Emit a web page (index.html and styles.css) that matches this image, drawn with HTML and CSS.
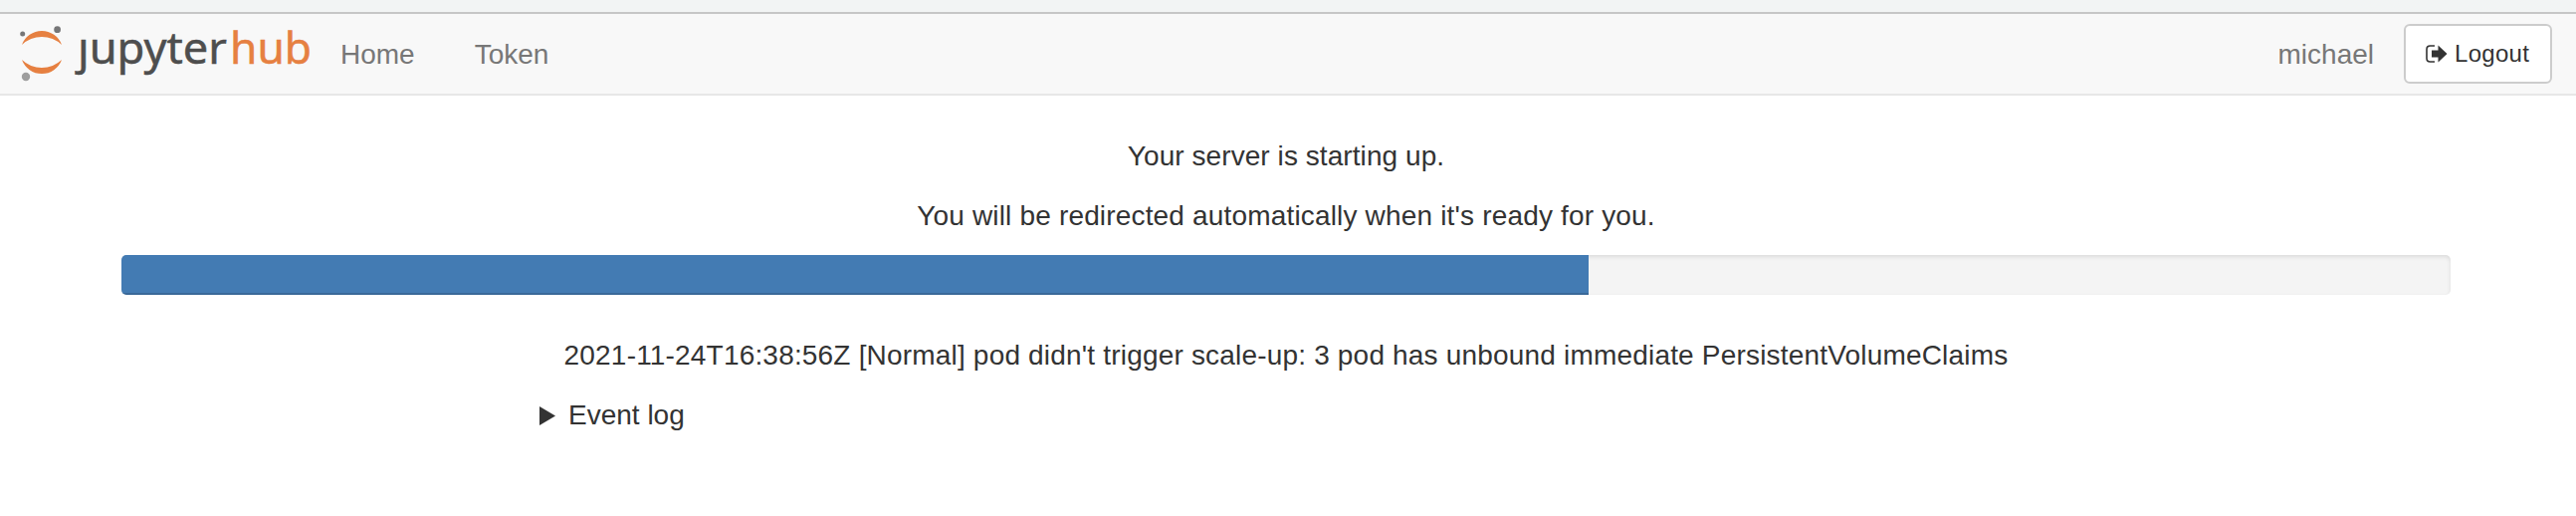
FILE: index.html
```html
<!DOCTYPE html>
<html lang="en">
<head>
<meta charset="utf-8">
<title>JupyterHub</title>
<link rel="stylesheet" href="styles.css">
</head>
<body>
<div class="chrome-edge"></div>
<nav class="navbar">
  <a class="brand">
    <svg class="logo" width="320" height="80" viewBox="0 14 320 80" role="img" aria-label="jupyterhub">
      <path class="orange" d="M22 45A21.300 21.300 0 0 1 62 45A29 29 0 0 0 22 45Z"/>
      <path class="orange" d="M22 60A21.300 21.300 0 0 0 62 60A29 29 0 0 1 22 60Z"/>
      <circle cx="22.700" cy="34" r="2.500" fill="#767677"/>
      <circle cx="57.600" cy="29.700" r="3.400" fill="#767677"/>
      <circle cx="26" cy="77" r="4.200" fill="#9e9e9e"/>
      <text class="word dark" x="78" y="64" textLength="150" lengthAdjust="spacingAndGlyphs">ȷupyter</text>
      <text class="word orange" x="231" y="64" textLength="82" lengthAdjust="spacingAndGlyphs">hub</text>
    </svg>
  </a>
  <a class="nav-link">Home</a>
  <a class="nav-link">Token</a>
  <div class="account">
    <span class="user">michael</span>
    <a class="logout">
      <svg class="logout-icon" width="22" height="18" viewBox="0 0 22 18">
        <path d="M9 1H4.500Q1 1 1 4.500V13.500Q1 17 4.500 17H9" fill="none" stroke="#333" stroke-width="1.600"/>
        <path d="M6 5.500H12.500V0.500L21.500 9L12.500 17.500V12.500H6Z" fill="#333"/>
      </svg>
      <span>Logout</span>
    </a>
  </div>
</nav>
<main class="container">
  <p class="line heading">Your server is starting up.</p>
  <p class="line">You will be redirected automatically when it's ready for you.</p>
  <div class="progress"><div class="progress-bar" style="width:63%"></div></div>
  <p class="line message">2021-11-24T16:38:56Z [Normal] pod didn't trigger scale-up: 3 pod has unbound immediate PersistentVolumeClaims</p>
  <div class="event-log">
    <svg class="marker" width="16" height="19" viewBox="0 0 16 19"><path d="M0 0L16 9.500L0 19Z" fill="#333"/></svg>
    <span>Event log</span>
  </div>
</main>
</body>
</html>
```
FILE: styles.css
```css
* { box-sizing: border-box; }
body {
  margin: 0;
  background: #fff;
  color: #333;
  font: 28px/40px "Liberation Sans", Arial, sans-serif;
}
.chrome-edge {
  height: 14px;
  background: #f2f4f4;
  border-bottom: 2px solid #c6c6c6;
}
.navbar {
  display: flex;
  align-items: center;
  height: 82px;
  background: #f8f8f8;
  border-bottom: 2px solid #e7e7e7;
  color: #777;
}
.brand { width: 312px; height: 80px; }
.logo { display: block; overflow: visible; }
.word {
  font: 44.5px "Noto Sans", "Open Sans", sans-serif;
  stroke-width: .5px;
}
.dark { fill: #4e4e4e; }
.word.dark { stroke: #4e4e4e; }
.orange { fill: #e68041; }
.word.orange { stroke: #e68041; }
.nav-link { padding: 2px 30px 0; }
.user { padding-top: 2px; }
.account {
  display: flex;
  align-items: center;
  gap: 30px;
  margin-left: auto;
  padding-right: 24px;
}
.logout {
  display: flex;
  align-items: center;
  width: 149px;
  height: 60px;
  padding-left: 20px;
  gap: 7px;
  border: 2px solid #ccc;
  border-radius: 6px;
  background: #fff;
  color: #333;
  font-size: 24px;
  line-height: 36px;
  letter-spacing: .3px;
}
.container {
  width: 2340px;
  margin: 0 0 0 122px;
  padding-top: 41px;
}
.line {
  margin: 0 0 20px;
  text-align: center;
  letter-spacing: .17px;
}
.heading { letter-spacing: .07px; }
.message { letter-spacing: .186px; }
.progress {
  height: 40px;
  margin: -1px 0 41px;
  overflow: hidden;
  border-radius: 5px;
  background: #f4f4f4;
  box-shadow: inset 0 2px 4px rgba(0, 0, 0, .1);
}
.progress-bar {
  height: 100%;
  background: #437bb3;
  box-shadow: inset 0 -2px 0 rgba(0, 0, 0, .15);
}
.event-log {
  display: flex;
  align-items: center;
  gap: 13px;
  margin-left: 420px;
}
.marker { margin-top: 1px; }
```
